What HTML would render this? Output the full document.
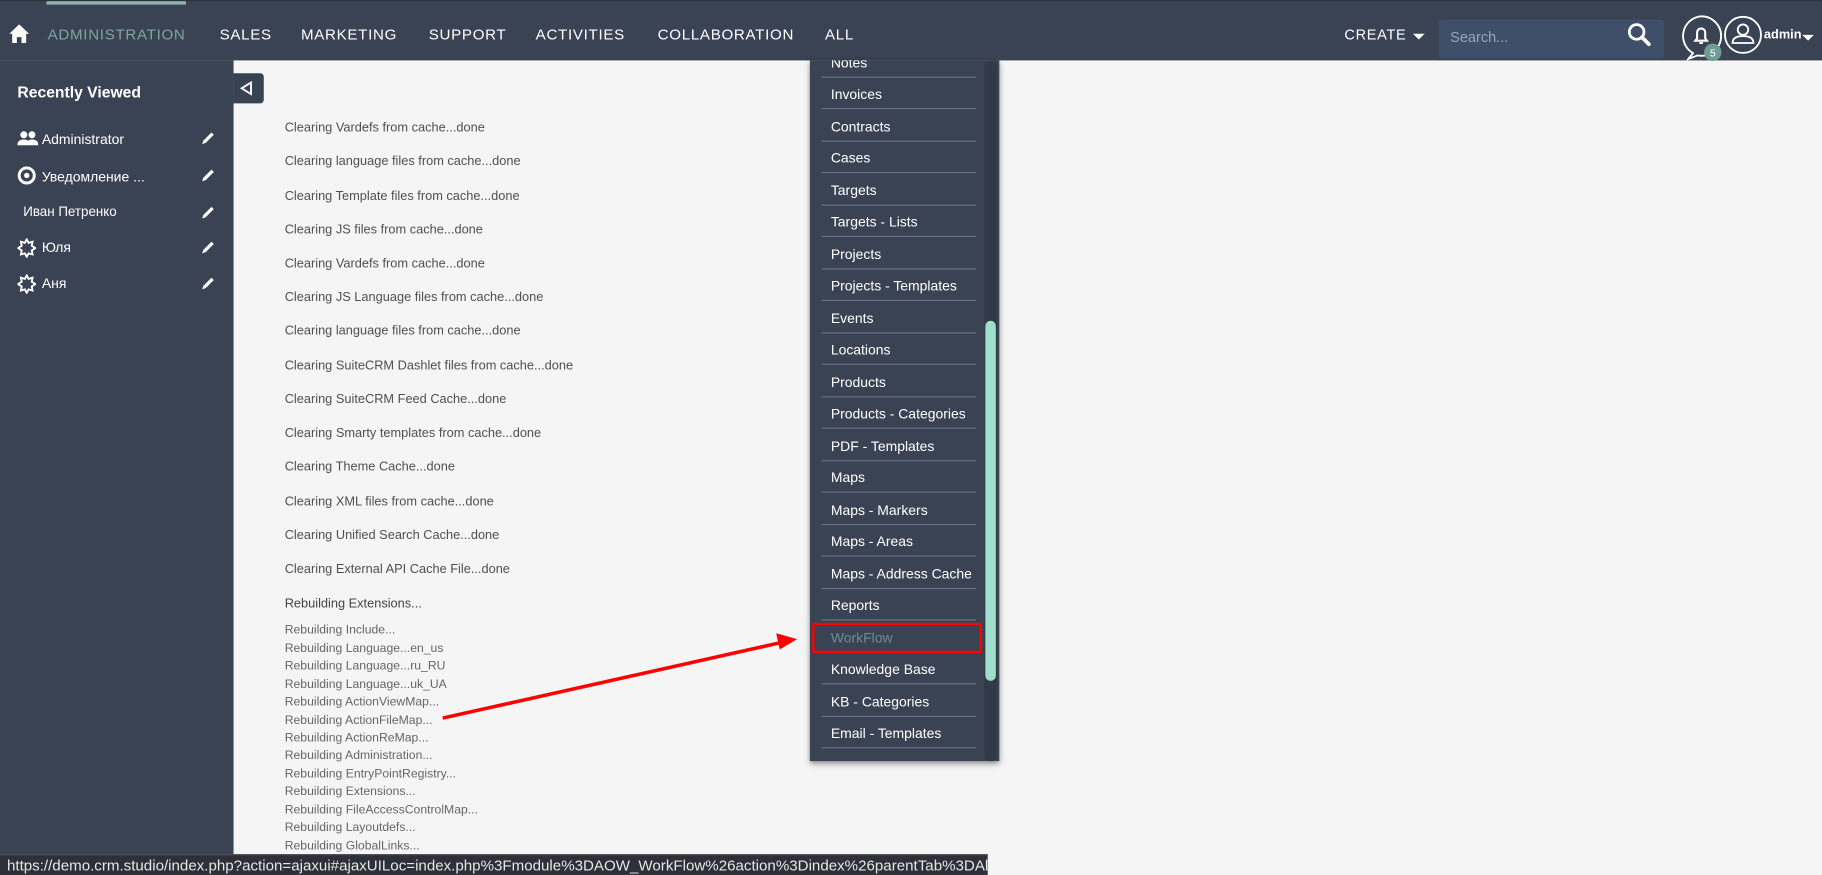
<!DOCTYPE html>
<html><head><meta charset="utf-8"><style>
html,body{margin:0;padding:0;width:1822px;height:874px;overflow:hidden;background:#f5f5f5}
#w{position:absolute;left:0;top:0;width:1568px;height:752px;transform:scale(1.16199);transform-origin:0 0;font-family:"Liberation Sans","Noto Sans CJK SC",sans-serif;}
.a{position:absolute;white-space:nowrap}
#hdr{position:absolute;left:0;top:0;width:1568px;height:52px;background:#3a4354;border-top:1px solid #2a2f38;box-sizing:border-box}
.nav{position:absolute;top:21px;color:#fff;font-size:13px;letter-spacing:0.6px}
#side{position:absolute;left:0;top:52px;width:201px;height:700px;background:#3a4354}
.si{position:absolute;left:36px;color:#fff;font-size:12px}
.pen{position:absolute;left:172px;width:14px;height:14px}
.c{position:absolute;left:245px;color:#505050;font-size:11px}
.r{position:absolute;left:245px;color:#666;font-size:10.5px}
#dd{position:absolute;left:697px;top:52px;width:163px;height:603px;background:#3a4354;box-shadow:0 2px 5px rgba(0,0,0,.45);overflow:hidden}
.di{position:absolute;left:18px;color:#fff;font-size:12px}
.sep{position:absolute;left:10px;width:133px;height:1px;background:#6a7283}
</style></head><body><div id="w">
<div id="hdr">
<div class="a" style="left:40px;top:0;width:120px;height:3px;background:#8fb1a9"></div>
<svg class="a" style="left:8px;top:19px" width="17" height="17" viewBox="0 0 17 17"><path d="M8.5 1 L17 9 L14.5 9 L14.5 17 L10.5 17 L10.5 12 L6.5 12 L6.5 17 L2.5 17 L2.5 9 L0 9 Z" fill="#fff"/></svg>
<div class="nav" style="left:41px;color:#7fa69c">ADMINISTRATION</div>
<div class="nav" style="left:189px">SALES</div>
<div class="nav" style="left:259px">MARKETING</div>
<div class="nav" style="left:369px">SUPPORT</div>
<div class="nav" style="left:461px">ACTIVITIES</div>
<div class="nav" style="left:566px">COLLABORATION</div>
<div class="nav" style="left:710px">ALL</div>
<div class="nav" style="left:1157px;font-size:12.5px;top:22px">CREATE</div>
<div class="a" style="left:1216px;top:28px;border-left:5px solid transparent;border-right:5px solid transparent;border-top:5px solid #fff"></div>
<div class="a" style="left:1238px;top:16px;width:194px;height:33px;background:#404f69;border-radius:2px"></div>
<div class="a" style="left:1248px;top:24px;color:#9aa3b3;font-size:12.5px">Search...</div>
<svg class="a" style="left:1400px;top:18px" width="22" height="22" viewBox="0 0 22 22"><circle cx="8.5" cy="8.5" r="6.3" fill="none" stroke="#fff" stroke-width="2.4"/><path d="M13 13 L19 19" stroke="#fff" stroke-width="3.2" stroke-linecap="round"/></svg>
<svg class="a" style="left:1445px;top:10px" width="40" height="44" viewBox="0 0 40 44"><path d="M19 3 a17 17 0 1 1 -3 33.7 l-8 3 l4 -5 A17 17 0 0 1 19 3Z" fill="none" stroke="#fff" stroke-width="1.6"/><path d="M14 24 h10 l-1.5 -2 v-5 a3.5 3.5 0 0 0 -7 0 v5 Z M17.5 26 h3" fill="none" stroke="#fff" stroke-width="1.8"/><circle cx="29" cy="34" r="7.5" fill="#6f9d94"/><text x="29" y="37.5" text-anchor="middle" font-size="9" fill="#fff" font-family="Liberation Sans">5</text></svg>
<svg class="a" style="left:1483px;top:12px" width="34" height="34" viewBox="0 0 34 34"><circle cx="17" cy="17" r="15.5" fill="none" stroke="#fff" stroke-width="1.6"/><circle cx="17" cy="12.5" r="4.5" fill="none" stroke="#fff" stroke-width="1.6"/><path d="M8 24 q0-6 9-6 q9 0 9 6 Z" fill="none" stroke="#fff" stroke-width="1.6"/></svg>
<div class="a" style="left:1518px;top:23px;color:#fff;font-size:11px;font-weight:bold">admin</div>
<div class="a" style="left:1551px;top:29px;border-left:5px solid transparent;border-right:5px solid transparent;border-top:5px solid #fff"></div>
</div>
<div id="side">
<div class="a" style="left:15px;top:20px;color:#fff;font-size:13.5px;font-weight:bold">Recently Viewed</div>
<svg class="a" style="left:15px;top:60px" width="18" height="14" viewBox="0 0 18 14"><circle cx="5.5" cy="4" r="3" fill="#fff"/><circle cx="12.5" cy="4" r="3" fill="#fff"/><path d="M0 13 q0-5 5.5-5 q5.5 0 5.5 5Z M8 13 q0-5 4.5-5 q5.5 0 5.5 5Z" fill="#fff"/></svg>
<div class="si" style="top:61px">Administrator</div>
<svg class="a" style="left:15px;top:91px" width="16" height="16"><circle cx="8" cy="8" r="6.5" fill="none" stroke="#fff" stroke-width="2.5"/><circle cx="8" cy="8" r="2.3" fill="#fff"/></svg>
<div class="si" style="top:93px">Уведомление ...</div>
<div class="si" style="top:125px;left:20px;font-size:11.5px">Иван Петренко</div>
<svg class="a" style="left:15px;top:153px" width="16" height="17" viewBox="0 0 16 17"><path d="M8 1 L9.6 4 L13 3 L12.3 6.5 L15.5 8.5 L12.3 10.5 L13 14 L9.6 13 L8 16 L6.4 13 L3 14 L3.7 10.5 L0.5 8.5 L3.7 6.5 L3 3 L6.4 4 Z" fill="none" stroke="#fff" stroke-width="1.6"/></svg>
<div class="si" style="top:154px">Юля</div>
<svg class="a" style="left:15px;top:184px" width="16" height="17" viewBox="0 0 16 17"><path d="M8 1 L9.6 4 L13 3 L12.3 6.5 L15.5 8.5 L12.3 10.5 L13 14 L9.6 13 L8 16 L6.4 13 L3 14 L3.7 10.5 L0.5 8.5 L3.7 6.5 L3 3 L6.4 4 Z" fill="none" stroke="#fff" stroke-width="1.6"/></svg>
<div class="si" style="top:185px">Аня</div>
<svg class="pen" style="top:60px" viewBox="0 0 14 14"><path d="M2 12 L3 9 L10 2 L12 4 L5 11 Z" fill="#fff"/></svg>
<svg class="pen" style="top:92px" viewBox="0 0 14 14"><path d="M2 12 L3 9 L10 2 L12 4 L5 11 Z" fill="#fff"/></svg>
<svg class="pen" style="top:124px" viewBox="0 0 14 14"><path d="M2 12 L3 9 L10 2 L12 4 L5 11 Z" fill="#fff"/></svg>
<svg class="pen" style="top:154px" viewBox="0 0 14 14"><path d="M2 12 L3 9 L10 2 L12 4 L5 11 Z" fill="#fff"/></svg>
<svg class="pen" style="top:185px" viewBox="0 0 14 14"><path d="M2 12 L3 9 L10 2 L12 4 L5 11 Z" fill="#fff"/></svg>
</div>
<div class="a" style="left:201px;top:63px;width:26px;height:26px;background:#3a4354;border-radius:0 3px 3px 0"></div>
<svg class="a" style="left:205px;top:69px" width="14" height="14"><path d="M11 2 L3 7 L11 12 Z" fill="none" stroke="#fff" stroke-width="1.6"/></svg>

<div class="c" style="top:104px">Clearing Vardefs from cache...done</div>
<div class="c" style="top:133px">Clearing language files from cache...done</div>
<div class="c" style="top:163px">Clearing Template files from cache...done</div>
<div class="c" style="top:192px">Clearing JS files from cache...done</div>
<div class="c" style="top:221px">Clearing Vardefs from cache...done</div>
<div class="c" style="top:250px">Clearing JS Language files from cache...done</div>
<div class="c" style="top:279px">Clearing language files from cache...done</div>
<div class="c" style="top:309px">Clearing SuiteCRM Dashlet files from cache...done</div>
<div class="c" style="top:338px">Clearing SuiteCRM Feed Cache...done</div>
<div class="c" style="top:367px">Clearing Smarty templates from cache...done</div>
<div class="c" style="top:396px">Clearing Theme Cache...done</div>
<div class="c" style="top:426px">Clearing XML files from cache...done</div>
<div class="c" style="top:455px">Clearing Unified Search Cache...done</div>
<div class="c" style="top:484px">Clearing External API Cache File...done</div>
<div class="c" style="top:514px;color:#444">Rebuilding Extensions...</div>
<div class="r" style="top:536px">Rebuilding Include...</div>
<div class="r" style="top:552px">Rebuilding Language...en_us</div>
<div class="r" style="top:567px">Rebuilding Language...ru_RU</div>
<div class="r" style="top:583px">Rebuilding Language...uk_UA</div>
<div class="r" style="top:598px">Rebuilding ActionViewMap...</div>
<div class="r" style="top:614px">Rebuilding ActionFileMap...</div>
<div class="r" style="top:629px">Rebuilding ActionReMap...</div>
<div class="r" style="top:644px">Rebuilding Administration...</div>
<div class="r" style="top:660px">Rebuilding EntryPointRegistry...</div>
<div class="r" style="top:675px">Rebuilding Extensions...</div>
<div class="r" style="top:691px">Rebuilding FileAccessControlMap...</div>
<div class="r" style="top:706px">Rebuilding Layoutdefs...</div>
<div class="r" style="top:722px">Rebuilding GlobalLinks...</div>

<div id="dd">
<div class="di" style="top:-5px">Notes</div><div class="sep" style="top:14px"></div>
<div class="di" style="top:22px">Invoices</div><div class="sep" style="top:41px"></div>
<div class="di" style="top:50px">Contracts</div><div class="sep" style="top:69px"></div>
<div class="di" style="top:77px">Cases</div><div class="sep" style="top:96px"></div>
<div class="di" style="top:105px">Targets</div><div class="sep" style="top:124px"></div>
<div class="di" style="top:132px">Targets - Lists</div><div class="sep" style="top:151px"></div>
<div class="di" style="top:160px">Projects</div><div class="sep" style="top:179px"></div>
<div class="di" style="top:187px">Projects - Templates</div><div class="sep" style="top:206px"></div>
<div class="di" style="top:215px">Events</div><div class="sep" style="top:234px"></div>
<div class="di" style="top:242px">Locations</div><div class="sep" style="top:261px"></div>
<div class="di" style="top:270px">Products</div><div class="sep" style="top:289px"></div>
<div class="di" style="top:297px">Products - Categories</div><div class="sep" style="top:316px"></div>
<div class="di" style="top:325px">PDF - Templates</div><div class="sep" style="top:344px"></div>
<div class="di" style="top:352px">Maps</div><div class="sep" style="top:371px"></div>
<div class="di" style="top:380px">Maps - Markers</div><div class="sep" style="top:399px"></div>
<div class="di" style="top:407px">Maps - Areas</div><div class="sep" style="top:426px"></div>
<div class="di" style="top:435px">Maps - Address Cache</div><div class="sep" style="top:454px"></div>
<div class="di" style="top:462px">Reports</div><div class="sep" style="top:481px"></div>
<div class="di" style="top:490px;color:#6b8f8a">WorkFlow</div>
<div class="a" style="left:2px;top:484px;width:142px;height:22px;border:2.5px solid #ff0000;box-sizing:content-box"></div>
<div class="di" style="top:517px">Knowledge Base</div><div class="sep" style="top:536px"></div>
<div class="di" style="top:545px">KB - Categories</div><div class="sep" style="top:564px"></div>
<div class="di" style="top:572px">Email - Templates</div><div class="sep" style="top:591px"></div>
<div class="a" style="left:150px;top:0;width:11px;height:603px;background:#323a48;border-radius:5px"></div>
<div class="a" style="left:151px;top:224px;width:9px;height:310px;background:#9fe0cd;border-radius:5px"></div>
</div>
<svg class="a" style="left:0;top:0" width="1568" height="752"><path d="M381 618 L672 553" stroke="#ff0000" stroke-width="3"/><path d="M686 550 L668 545 L671 559 Z" fill="#ff0000"/></svg>
<div class="a" style="left:0;top:735px;width:850px;height:17px;background:#2d3038;border-top:1px solid #555;overflow:hidden"><div class="a" style="left:6px;top:1px;color:#e6e6e6;font-size:13px">https://demo.crm.studio/index.php?action=ajaxui#ajaxUILoc=index.php%3Fmodule%3DAOW_WorkFlow%26action%3Dindex%26parentTab%3DAll</div></div>
</div></body></html>
